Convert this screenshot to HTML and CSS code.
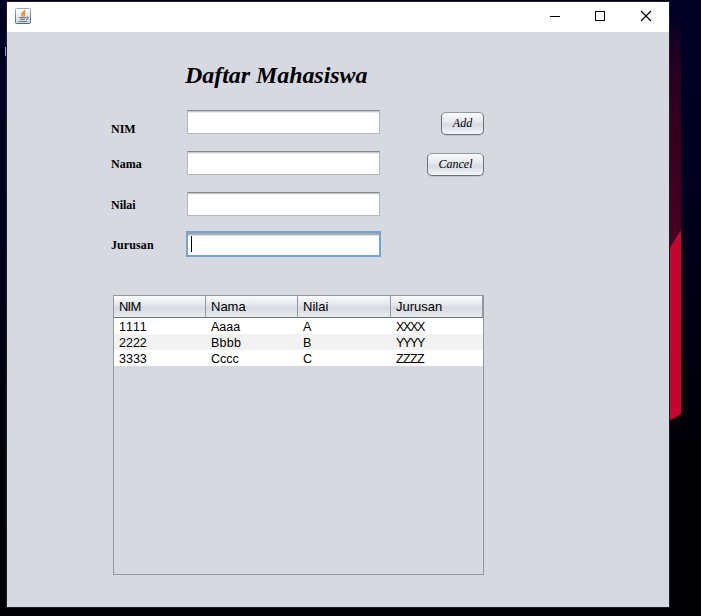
FILE: index.html
```html
<!DOCTYPE html>
<html lang="id">
<head>
<meta charset="utf-8">
<title>Daftar Mahasiswa</title>
<link rel="stylesheet" href="styles.css">
</head>
<body>
<svg class="wallpaper" width="701" height="616" aria-hidden="true">
  <defs>
    <linearGradient id="night" x1="0" y1="0" x2="0" y2="1"><stop offset="0" stop-color="#000026"/><stop offset=".4" stop-color="#00001c"/><stop offset=".72" stop-color="#000006"/><stop offset="1" stop-color="#000003"/></linearGradient>
    <linearGradient id="glow" x1="0" y1="0" x2="0" y2="1"><stop offset="0" stop-color="#50001f" stop-opacity="0"/><stop offset=".35" stop-color="#30001e"/><stop offset="1" stop-color="#4c0022"/></linearGradient>
  </defs>
  <rect width="701" height="616" fill="url(#night)"/>
  <rect x="669" y="15" width="12" height="240" fill="url(#glow)"/>
  <path d="M669 249L681 230V414L669 421Z" fill="#c6042f"/>
  <path d="M5.5 47V56" stroke="#8f9fe0"/>
</svg>
<main class="window">
  <header class="titlebar">
    <svg class="java" width="16" height="16" viewBox="0 0 16 16">
      <defs><linearGradient id="tile" x1="0" y1="0" x2="0" y2="1"><stop offset="0" stop-color="#fff"/><stop offset="1" stop-color="#cbd6df"/></linearGradient>
      <linearGradient id="edge" x1="0" y1="0" x2="0" y2="1"><stop offset="0" stop-color="#9daebb"/><stop offset="1" stop-color="#4b6a80"/></linearGradient></defs>
      <rect x=".5" y=".5" width="15" height="15" rx="1" fill="url(#tile)" stroke="url(#edge)"/>
      <path d="M9.8 2C10 4 6.4 4.7 6.7 6.5L7.8 8.6M10.6 4.6C8.5 5.5 8.3 6.3 9.4 7.2L8.8 8.3" fill="none" stroke="#ee8228" stroke-width="1.4"/>
      <path d="M4 9.5H11M11.5 8.8C14.3 8.7 13.4 10.8 11 11.4M5.2 11.4H10M3.5 13.5H12" fill="none" stroke="#5b7f9b" stroke-width="1.1"/>
    </svg>
    <svg class="controls" width="102" height="12" viewBox="0 0 102 12" fill="none" stroke="#000" shape-rendering="crispEdges">
      <path d="M0 6.5H10"/><rect x="45.5" y="1.5" width="9" height="9"/><path d="M91 1L101 11M101 1L91 11" shape-rendering="auto" stroke-width="1.2"/>
    </svg>
  </header>
  <section class="content">
    <h1>Daftar Mahasiswa</h1>
    <form class="form">
      <label class="nim" for="nim">NIM</label><input id="nim"><button class="add" type="button">Add</button>
      <label for="nama">Nama</label><input id="nama"><button class="cancel" type="button">Cancel</button>
      <label for="nilai">Nilai</label><input id="nilai"><i></i>
      <label class="jurusan" for="jurusan">Jurusan</label><div class="active"><span class="caret"></span></div><i></i>
    </form>
    <div class="pane">
      <table>
        <colgroup><col class="c1"><col class="c2"><col class="c3"><col class="c4"></colgroup>
        <thead><tr><th><span class="caps">NIM</span></th><th>Nama</th><th>Nilai</th><th>Jurusan</th></tr></thead>
        <tbody>
          <tr><td>1111</td><td>Aaaa</td><td>A</td><td><span class="tight">XXXX</span></td></tr>
          <tr><td>2222</td><td class="wide">Bbbb</td><td>B</td><td><span class="tight">YYYY</span></td></tr>
          <tr><td>3333</td><td>Cccc</td><td>C</td><td><span class="zed">ZZZZ</span></td></tr>
        </tbody>
      </table>
    </div>
  </section>
</main>
</body>
</html>
```
FILE: styles.css
```css
* { box-sizing: border-box; }
body { margin: 0; width: 701px; height: 616px; overflow: hidden; background: #000008; padding: 1px 0 0 6px; }
.wallpaper { position: absolute; left: 0; top: 0; z-index: -1; }
.window { width: 664px; height: 607px; border: 1px solid #1b2024; background: #d6d9e0; color: #000; }
.titlebar { height: 30px; background: #fff; display: flex; justify-content: space-between; padding: 6px 17px 0 8px; }
.controls { margin-top: 2px; }
.content { padding: 29px 0 0 104px; }
h1 { margin: 0 0 0 74px; height: 49px; font: italic bold 24px/29px "Liberation Serif", serif; letter-spacing: -.06px; white-space: nowrap; }
.form { display: grid; grid-template-columns: 76px 193px 104px; grid-template-rows: repeat(4, 41px); margin: 0; }
label { font: bold 12px/16px "Liberation Serif", serif; padding-top: 5px; }
.nim { padding-top: 11px; }
.jurusan { padding-top: 4px; letter-spacing: .1px; }
input, .active { width: 193px; height: 24px; border: 1px solid #b5b6b9; border-top-color: #84868a; background: #fff; box-shadow: inset 0 1px #c9cacc, inset 0 2px #eeeeef; padding: 0; border-radius: 0; outline: none; }
.active { margin-top: -1px; padding: 3px; outline: 2px solid #73a4d1; outline-offset: -1px; box-shadow: inset 0 2px #aaabae, inset 0 3px #e0e1e3; }
.caret { display: block; width: 1px; height: 16px; background: #000; }
button { height: 23px; margin-top: 2px; justify-self: end; padding: 0 0 1px; border: 1px solid #6d7076; border-top-color: #92959a; border-radius: 5px; background: linear-gradient(#fafbfc, #e2e5ea 48%, #d6dae1 52%, #f3f5f9); color: #000; font: italic 12px/20px "Liberation Serif", serif; box-shadow: 0 1px #c1c5cd; }
.add { width: 43px; }
.cancel { width: 57px; }
.pane { width: 371px; height: 280px; margin: 21px 0 0 2px; border: 1px solid #9297a1; }
table { width: 369px; table-layout: fixed; border-collapse: separate; border-spacing: 0; font: 12px/16px "Liberation Sans", sans-serif; font-kerning: none; }
.c1, .c2 { width: 92px; }
.c3 { width: 93px; }
.c4 { width: 92px; }
th { height: 22px; padding: 0 0 0 5px; text-align: left; font-weight: 400; font-size: 13px; line-height: 20px; border-right: 1px solid #9297a1; border-bottom: 1px solid #6d727c; background: linear-gradient(#fafbfc, #e0e3e8 48%, #d5d8df 52%, #e9ebf0); }
td { height: 16px; padding: 2px 0 0 5px; background: #fff; font-size: 12.5px; line-height: 14px; }
tr:nth-child(2) td { background: #f2f2f2; }
.caps { letter-spacing: -.8px; }
.wide { letter-spacing: .25px; }
.tight { letter-spacing: -1.3px; }
.zed { letter-spacing: -.6px; }
```
